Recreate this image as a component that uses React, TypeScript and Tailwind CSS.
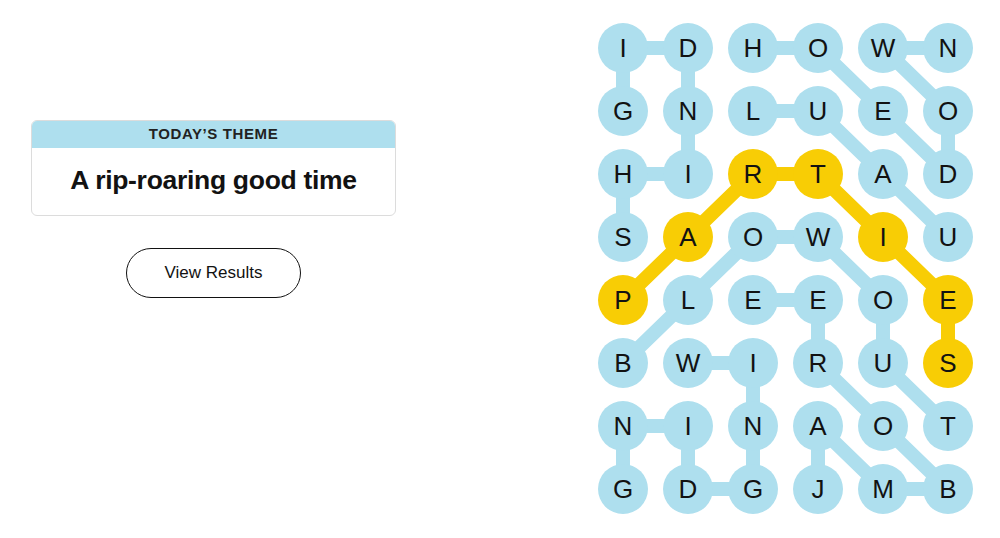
import { FunctionComponent, ReactElement } from "react";

const letters = [
  "IDHOWN",
  "GNLUEO",
  "HIRTAD",
  "SAOWIU",
  "PLEEOE",
  "BWIRUS",
  "NINAOT",
  "GDGJMB",
];

// each word is a path of [row, col]
const words: { path: [number, number][]; spangram?: boolean }[] = [
  { path: [[3, 0], [2, 0], [2, 1], [1, 1], [0, 1], [0, 0], [1, 0]] }, // shindig
  { path: [[0, 2], [0, 3], [1, 4], [2, 5], [1, 5], [0, 4], [0, 5]] }, // hoedown
  { path: [[1, 2], [1, 3], [2, 4], [3, 5]] }, // luau
  { path: [[4, 0], [3, 1], [2, 2], [2, 3], [3, 4], [4, 5], [5, 5]], spangram: true },
  { path: [[5, 0], [4, 1], [3, 2], [3, 3], [4, 4], [5, 4], [6, 5]] }, // blowout
  { path: [[5, 1], [5, 2], [6, 2], [7, 2], [7, 1], [6, 1], [6, 0], [7, 0]] }, // wingding
  { path: [[7, 3], [6, 3], [7, 4], [7, 5], [6, 4], [5, 3], [4, 3], [4, 2]] }, // jamboree
];

const cx = (c: number) => 25 + c * 65;
const cy = (r: number) => 25 + r * 63;

const isSpangram = (r: number, c: number) =>
  words.some((w) => w.spangram && w.path.some(([pr, pc]) => pr === r && pc === c));

const Board: FunctionComponent = (): ReactElement => {
  return (
    <div className="relative w-[375px] h-[491px]">
      <svg
        className="absolute inset-0"
        width={375}
        height={491}
        viewBox="0 0 375 491"
      >
        {words.map((w, i) => (
          <polyline
            key={i}
            points={w.path.map(([r, c]) => `${cx(c)},${cy(r)}`).join(" ")}
            fill="none"
            stroke={w.spangram ? "#f8cd05" : "#aedfee"}
            strokeWidth={14}
            strokeLinejoin="round"
          />
        ))}
      </svg>
      <div className="relative grid grid-cols-6 gap-x-[15px] gap-y-[13px]">
        {letters.map((row, r) =>
          row.split("").map((ch, c) => (
            <div
              key={`${r}-${c}`}
              className={`size-[50px] rounded-full flex items-center justify-center text-[26px] text-[#121212] ${
                isSpangram(r, c) ? "bg-[#f8cd05]" : "bg-[#aedfee]"
              }`}
            >
              {ch}
            </div>
          ))
        )}
      </div>
    </div>
  );
};

const App: FunctionComponent = (): ReactElement => {
  return (
    <div
      className="w-[1000px] h-[538px] bg-white flex justify-between pr-[27px] text-[#121212]"
      style={{ fontFamily: '"Liberation Sans", Arial, sans-serif' }}
    >
      <div className="w-[427px] pl-[31px] pr-[31px] pt-[120px] flex flex-col items-center">
        <div className="w-full rounded-md border border-[#dcdcdc] overflow-hidden">
          <div className="h-[27px] bg-[#aedfee] flex items-center justify-center text-[15px] font-bold tracking-[0.6px] text-[#222]">
            TODAY’S THEME
          </div>
          <div className="h-[67px] flex items-center justify-center pb-[2px] text-[26.5px] font-bold tracking-[-0.3px]">
            A rip-roaring good time
          </div>
        </div>
        <button className="mt-[32px] w-[175px] h-[50px] rounded-full border border-[#121212] text-[17px] text-[#121212]">
          View Results
        </button>
      </div>
      <div className="pt-[23px]">
        <Board />
      </div>
    </div>
  );
};

export default App;
